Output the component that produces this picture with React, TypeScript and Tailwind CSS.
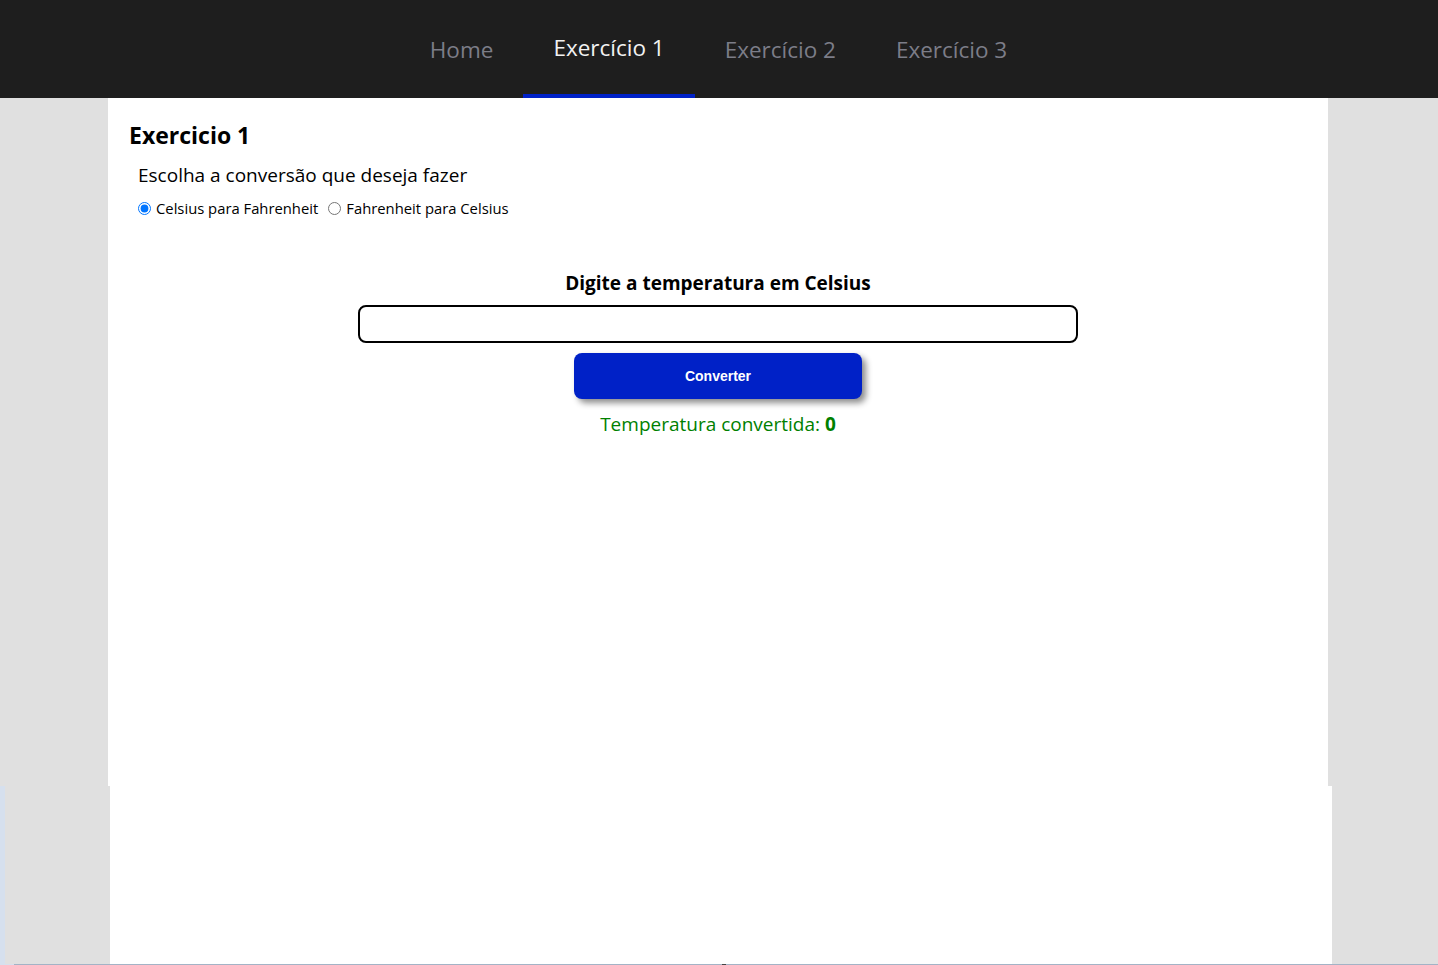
import React, { useState } from 'react';

const tabs = ['Home', 'Exercício 1', 'Exercício 2', 'Exercício 3'];

const NavBar: React.FC<{ active: number }> = ({ active }) => (
  <nav className="h-[98px] bg-[#1e1e1e] flex justify-center pr-[1px]">
    {tabs.map((t, i) => (
      <div
        key={t}
        className={
          i === active
            ? 'px-[30px] flex items-center pt-[1px] border-b-[4px] border-[#0021c7] text-[#f2f2f2] text-[22.5px]'
            : 'px-[30px] flex items-center pt-[6px] border-b-[4px] border-transparent text-[#7c7d88] text-[22.5px]'
        }
      >
        {t}
      </div>
    ))}
  </nav>
);

export default function App() {
  const [mode, setMode] = useState<'cf' | 'fc'>('cf');
  const [value, setValue] = useState('');
  const [result, setResult] = useState(0);

  const convert = () => {
    const n = parseFloat(value) || 0;
    setResult(mode === 'cf' ? n * 1.8 + 32 : (n - 32) / 1.8);
  };

  return (
    <div className="min-h-[965px] bg-[#e0e0e0] font-['Open_Sans',sans-serif] text-black">
      <NavBar active={1} />

      <main className="ml-[108px] w-[1220px] h-[688px] bg-white pt-[21px]">
        <h1 className="ml-[21px] text-[23px] font-bold leading-[32px]">Exercicio 1</h1>
        <p className="ml-[30px] mt-[11px] text-[19px] leading-[26px]">Escolha a conversão que deseja fazer</p>
        <div className="ml-[30px] mt-[10px] flex items-center text-[14.8px] leading-[20px]">
          <label className="flex items-center">
            <input
              type="radio"
              name="conv"
              checked={mode === 'cf'}
              onChange={() => setMode('cf')}
              className="w-[13px] h-[13px] mr-[5px] accent-[#0075ff]"
            />
            Celsius para Fahrenheit
          </label>
          <label className="flex items-center ml-[10px]">
            <input
              type="radio"
              name="conv"
              checked={mode === 'fc'}
              onChange={() => setMode('fc')}
              className="w-[13px] h-[13px] mr-[5px] accent-[#0075ff]"
            />
            Fahrenheit para Celsius
          </label>
        </div>

        <div className="mt-[52px] flex flex-col items-center">
          <h2 className="text-[19px] font-bold leading-[26px]">
            Digite a temperatura em {mode === 'cf' ? 'Celsius' : 'Fahrenheit'}
          </h2>
          <input
            value={value}
            onChange={(e) => setValue(e.target.value)}
            className="mt-[9px] w-[720px] h-[38px] border-2 border-black rounded-[8px] px-3 outline-none"
          />
          <button
            onClick={convert}
            className="mt-[10px] w-[288px] h-[46px] rounded-[8px] bg-[#0021c7] text-white text-[14px] font-bold font-['Liberation_Sans',sans-serif] shadow-[4px_4px_6px_rgba(0,0,0,0.45)]"
          >
            Converter
          </button>
          <p className="mt-[12px] text-[19px] leading-[26px] text-[#008000]">
            Temperatura convertida: <span className="font-bold">{result}</span>
          </p>
        </div>
      </main>

      <div className="flex h-[178px]">
        <div className="w-[5px] bg-[#d6e0ee]" />
        <div className="w-[105px] bg-[#e0e0e0]" />
        <div className="w-[1222px] bg-white" />
        <div className="flex-1 bg-[#e0e0e0]" />
      </div>
      <div className="flex h-[1px]">
        <div className="w-[14px] bg-[#d6e0ee]" />
        <div className="w-[708px] bg-[#a3b3c6]" />
        <div className="w-[4px] bg-[#444]" />
        <div className="flex-1 bg-[#a3b3c6]" />
      </div>
    </div>
  );
}
